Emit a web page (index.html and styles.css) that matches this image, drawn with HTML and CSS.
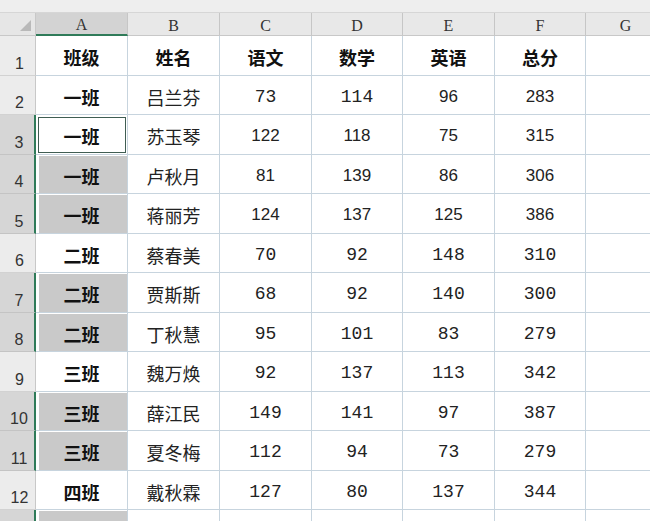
FILE: index.html
```html
<!DOCTYPE html>
<html lang="zh-CN">
<head>
<meta charset="utf-8">
<title>成绩表</title>
<link rel="stylesheet" href="styles.css">
</head>
<body>
<div class="sheet">
  <div class="topbar"></div>
  <div class="grid">
    <div class="corner"><span class="tri"></span></div>
    <div class="ch sel">A</div>
    <div class="ch">B</div>
    <div class="ch">C</div>
    <div class="ch">D</div>
    <div class="ch">E</div>
    <div class="ch">F</div>
    <div class="ch">G</div>

    <div class="rh">1</div>
    <div class="c b">班级</div><div class="c b">姓名</div><div class="c b">语文</div><div class="c b">数学</div><div class="c b">英语</div><div class="c b">总分</div><div class="c"></div>

    <div class="rh">2</div>
    <div class="c b">一班</div><div class="c">吕兰芬</div><div class="c n">73</div><div class="c n">114</div><div class="c s">96</div><div class="c s">283</div><div class="c"></div>

    <div class="rh sel">3</div>
    <div class="c b act">一班</div><div class="c">苏玉琴</div><div class="c s">122</div><div class="c s">118</div><div class="c s">75</div><div class="c s">315</div><div class="c"></div>

    <div class="rh sel">4</div>
    <div class="c b gray">一班</div><div class="c">卢秋月</div><div class="c s">81</div><div class="c s">139</div><div class="c s">86</div><div class="c s">306</div><div class="c"></div>

    <div class="rh sel">5</div>
    <div class="c b gray">一班</div><div class="c">蒋丽芳</div><div class="c s">124</div><div class="c s">137</div><div class="c s">125</div><div class="c s">386</div><div class="c"></div>

    <div class="rh">6</div>
    <div class="c b">二班</div><div class="c">蔡春美</div><div class="c n">70</div><div class="c n">92</div><div class="c n">148</div><div class="c n">310</div><div class="c"></div>

    <div class="rh sel">7</div>
    <div class="c b gray">二班</div><div class="c">贾斯斯</div><div class="c n">68</div><div class="c n">92</div><div class="c n">140</div><div class="c n">300</div><div class="c"></div>

    <div class="rh sel">8</div>
    <div class="c b gray">二班</div><div class="c">丁秋慧</div><div class="c n">95</div><div class="c n">101</div><div class="c n">83</div><div class="c n">279</div><div class="c"></div>

    <div class="rh">9</div>
    <div class="c b">三班</div><div class="c">魏万焕</div><div class="c n">92</div><div class="c n">137</div><div class="c n">113</div><div class="c n">342</div><div class="c"></div>

    <div class="rh sel">10</div>
    <div class="c b gray">三班</div><div class="c">薛江民</div><div class="c n">149</div><div class="c n">141</div><div class="c n">97</div><div class="c n">387</div><div class="c"></div>

    <div class="rh sel">11</div>
    <div class="c b gray">三班</div><div class="c">夏冬梅</div><div class="c n">112</div><div class="c n">94</div><div class="c n">73</div><div class="c n">279</div><div class="c"></div>

    <div class="rh">12</div>
    <div class="c b">四班</div><div class="c">戴秋霖</div><div class="c n">127</div><div class="c n">80</div><div class="c n">137</div><div class="c n">344</div><div class="c"></div>

    <div class="rh sel"></div>
    <div class="c b gray"></div><div class="c"></div><div class="c"></div><div class="c"></div><div class="c"></div><div class="c"></div><div class="c"></div>
  </div>
</div>
</body>
</html>
```

FILE: styles.css
```css
* { box-sizing: border-box; }
html, body { margin: 0; padding: 0; background: #ffffff; }
body { width: 650px; height: 521px; overflow: hidden; }

.sheet { width: 650px; height: 521px; overflow: hidden; }

.topbar {
  height: 13px;
  background: #eeeeee;
  border-bottom: 1px solid #d6d6d6;
}

.grid {
  display: grid;
  grid-template-columns: 36px 92px 92px 92px 91px 92px 91px 80px;
  grid-template-rows: 23px repeat(13, 39.5px);
}

.corner {
  background: #e6e6e6;
  border-right: 1px solid #c8c8c8;
  border-bottom: 1px solid #c8c8c8;
  position: relative;
}
.tri {
  position: absolute;
  right: 4px;
  bottom: 4px;
  width: 0;
  height: 0;
  border-left: 11px solid transparent;
  border-bottom: 11px solid #b9b9b9;
}

.ch {
  background: #e8e8e8;
  border-right: 1px solid #c6c6c6;
  border-bottom: 1px solid #c8c8c8;
  font-family: "Liberation Serif", "DejaVu Serif", serif;
  font-size: 16px;
  color: #333333;
  display: flex;
  align-items: center;
  justify-content: center;
  padding-top: 3px;
}
.ch.sel {
  background: #d3d3d3;
  border-bottom: 2px solid #2f7b59;
}

.rh {
  background: #ececec;
  border-right: 1px solid #c8c8c8;
  border-bottom: 1px solid #d2d2d2;
  font-family: "Liberation Sans", Arial, sans-serif;
  font-size: 16px;
  color: #333333;
  display: flex;
  align-items: flex-end;
  justify-content: center;
  padding-bottom: 2px;
  padding-left: 4px;
}
.rh.sel {
  background: #d6d6d6;
  border-right: 2px solid #2f7b59;
  border-bottom-color: #c4c4c4;
}

.c {
  border-right: 1px solid #c7d4de;
  border-bottom: 1px solid #c7d4de;
  display: flex;
  align-items: center;
  justify-content: center;
  padding-top: 4px;
  font-family: "Noto Sans CJK SC", "Noto Sans", sans-serif;
  font-size: 18px;
  color: #222222;
  background: #ffffff;
}
.c.b { font-weight: 700; color: #111111; }
.c.n {
  font-family: "Liberation Mono", "DejaVu Sans Mono", monospace;
  font-size: 18px;
}
.c.s {
  font-family: "Liberation Sans", Arial, sans-serif;
  font-size: 17px;
}
.c.gray {
  background: #c9c9c9;
  box-shadow: inset 3px 0 0 #ffffff, inset 0 1px 0 #ffffff;
}
.c.act {
  outline: 1px solid #3f5d52;
  outline-offset: -3px;
}
```
